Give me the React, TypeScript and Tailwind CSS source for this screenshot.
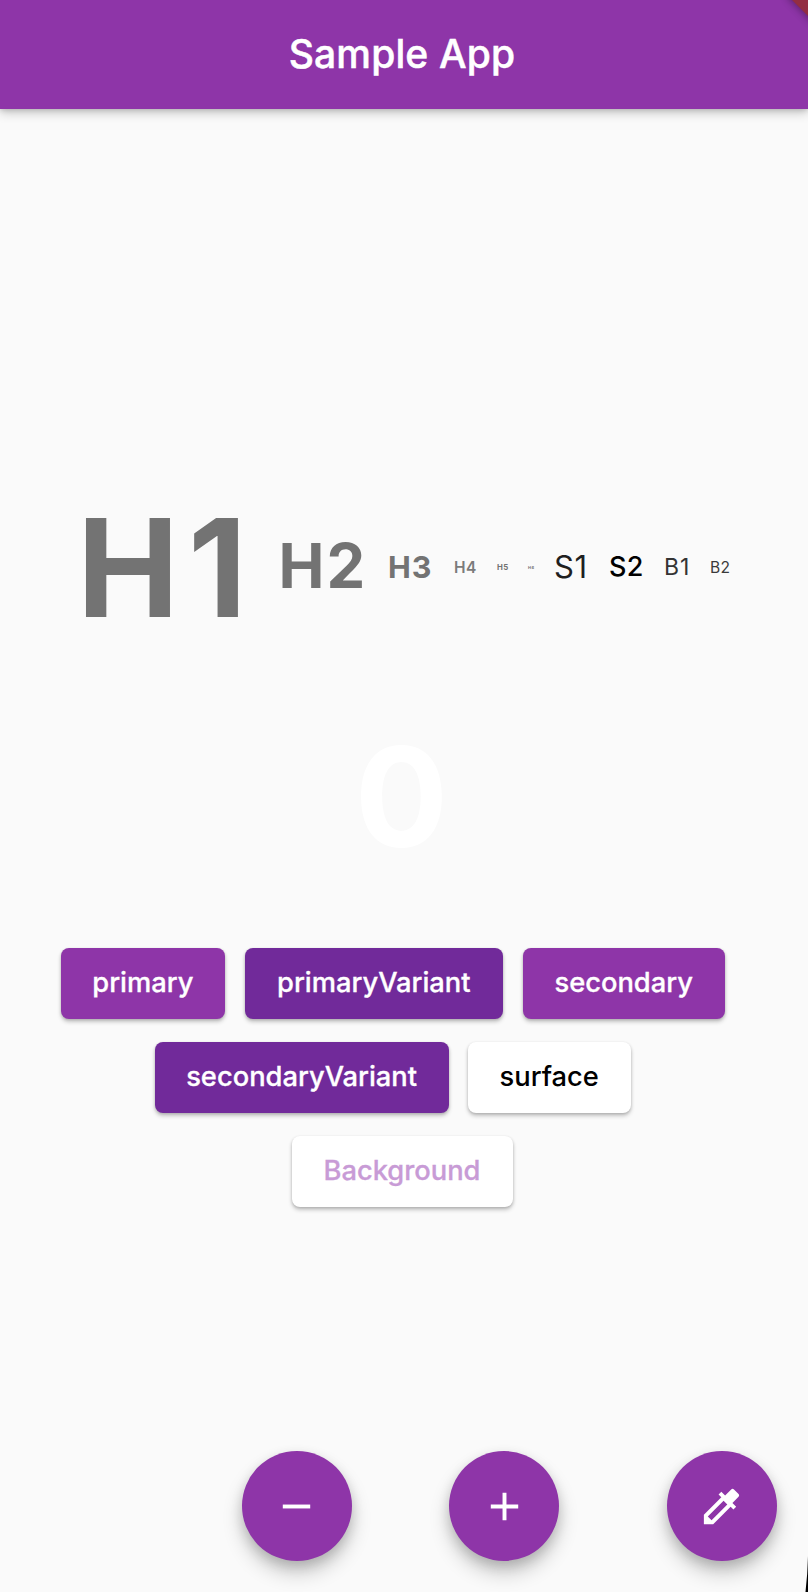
import { MdAdd, MdColorize, MdRemove } from "react-icons/md";

const samples = [
  { label: "H1", cls: "w-[201.5px] pt-[2px] text-[136.5px] tracking-[9px] font-bold text-[#737373]" },
  { label: "H2", cls: "w-[109.5px] pb-[3px] text-[61.5px] tracking-[2px] font-bold text-[#737373]" },
  { label: "H3", cls: "w-[66px] pb-[1px] text-[30.5px] tracking-[1px] font-bold text-[#737373]" },
  { label: "H4", cls: "w-[43px] text-[15.5px] tracking-[0.4px] font-semibold text-[#7b7b7b]" },
  { label: "H5", cls: "w-[31px] text-[7.8px] tracking-[0.4px] font-bold text-[#737373]" },
  { label: "H6", cls: "w-[26px] text-[4px] tracking-[0.5px] font-bold text-[#737373]" },
  { label: "S1", cls: "w-[55px] pb-[2px] text-[31px] tracking-[0.5px] font-normal text-[#1f1f1f]" },
  { label: "S2", cls: "w-[55px] pb-[3px] text-[27px] tracking-[0.4px] font-medium text-black" },
  { label: "B1", cls: "w-[46px] pb-[1px] text-[23px] tracking-[1px] font-normal text-[#333333]" },
  { label: "B2", cls: "w-[22px] text-[15.6px] tracking-[0.4px] font-normal text-[#3a3a3a]" },
];

const buttonRows = [
  {
    cls: "pl-[60.7px]",
    buttons: [
      { label: "primary", cls: "w-[164.3px] bg-[#8e35a8] text-white [-webkit-text-stroke:0.3px_white]" },
      { label: "primaryVariant", cls: "w-[258.5px] bg-[#712a9a] text-white [-webkit-text-stroke:0.3px_white]" },
      { label: "secondary", cls: "w-[202px] bg-[#8e35a8] text-white [-webkit-text-stroke:0.3px_white]" },
    ],
  },
  {
    cls: "pl-[154.6px]",
    buttons: [
      { label: "secondaryVariant", cls: "w-[294px] bg-[#712a9a] text-white [-webkit-text-stroke:0.3px_white]" },
      { label: "surface", cls: "w-[163px] bg-white pr-[1px] text-black" },
    ],
  },
  {
    cls: "pl-[292px]",
    buttons: [{ label: "Background", cls: "w-[221px] bg-white pr-[1px] text-[#c89bd6] [-webkit-text-stroke:0.3px_#c89bd6]" }],
  },
];

const actions = [
  { label: "Decrement", Icon: MdRemove, cls: "ml-[241.5px]" },
  { label: "Increment", Icon: MdAdd, cls: "ml-[97.8px]" },
  { label: "Pick color", Icon: MdColorize, cls: "ml-[107.3px]" },
];

export default function App() {
  return (
    <div className="relative flex h-[1592px] w-[808px] flex-col overflow-hidden bg-[#fafafa] font-['Inter',sans-serif]">
      <header className="flex h-[108.5px] shrink-0 items-center justify-center bg-[#8e35a8] pr-[4px] shadow-[0_4px_10px_rgba(0,0,0,0.2),0_1px_5px_rgba(0,0,0,0.16)]">
        <h1 className="text-[39px] leading-[108px] font-medium tracking-[0.15px] text-white [-webkit-text-stroke:0.5px_white]">
          Sample App
        </h1>
      </header>

      <main className="flex flex-col">
        <div className="mt-[376.5px] flex h-[165px] items-center pl-[77px]">
          {samples.map(({ label, cls }) => (
            <span key={label} className={`shrink-0 leading-none whitespace-nowrap ${cls}`}>
              {label}
            </span>
          ))}
        </div>

        <p className="mt-[63.5px] h-[164.5px] pr-[5px] text-center text-[138.5px] leading-[165px] font-bold text-white">0</p>

        <div className="mt-[70.3px] flex flex-col gap-[23.5px]">
          {buttonRows.map((row, i) => (
            <div key={i} className={`flex gap-[19.6px] ${row.cls}`}>
              {row.buttons.map(({ label, cls }) => (
                <button
                  key={label}
                  className={`h-[70.5px] shrink-0 rounded-[8px] pb-[1px] text-[27.3px] font-medium shadow-[0_3px_4px_rgba(0,0,0,0.2),0_1px_3px_rgba(0,0,0,0.16)] ${cls}`}
                >
                  {label}
                </button>
              ))}
            </div>
          ))}
        </div>
      </main>

      <div className="mt-[244.5px] flex">
        {actions.map(({ label, Icon, cls }) => (
          <button
            key={label}
            aria-label={label}
            className={`flex size-[110px] shrink-0 items-center justify-center rounded-full bg-[#8e35a8] text-white shadow-[0_12px_20px_rgba(0,0,0,0.2),0_5px_12px_rgba(0,0,0,0.15)] ${cls}`}
          >
            <Icon className="size-[47px]" />
          </button>
        ))}
      </div>

      <svg className="absolute top-0 right-0 h-[60px] w-[80px]" viewBox="0 0 80 60">
        <defs>
          <filter id="ribbon-shadow" x="-50%" y="-50%" width="200%" height="200%">
            <feGaussianBlur stdDeviation="5" />
          </filter>
        </defs>
        <path d="M60 -4L90 26V-20H60z" fill="#000" opacity="0.45" filter="url(#ribbon-shadow)" />
        <path d="M64 0L80 16V0z" fill="#932d42" />
      </svg>
      <svg className="absolute right-0 bottom-0 h-[40px] w-[4px]" viewBox="0 0 4 40">
        <path d="M4 4Q3.6 22 1.5 40H4z" fill="#000" />
      </svg>
    </div>
  );
}
